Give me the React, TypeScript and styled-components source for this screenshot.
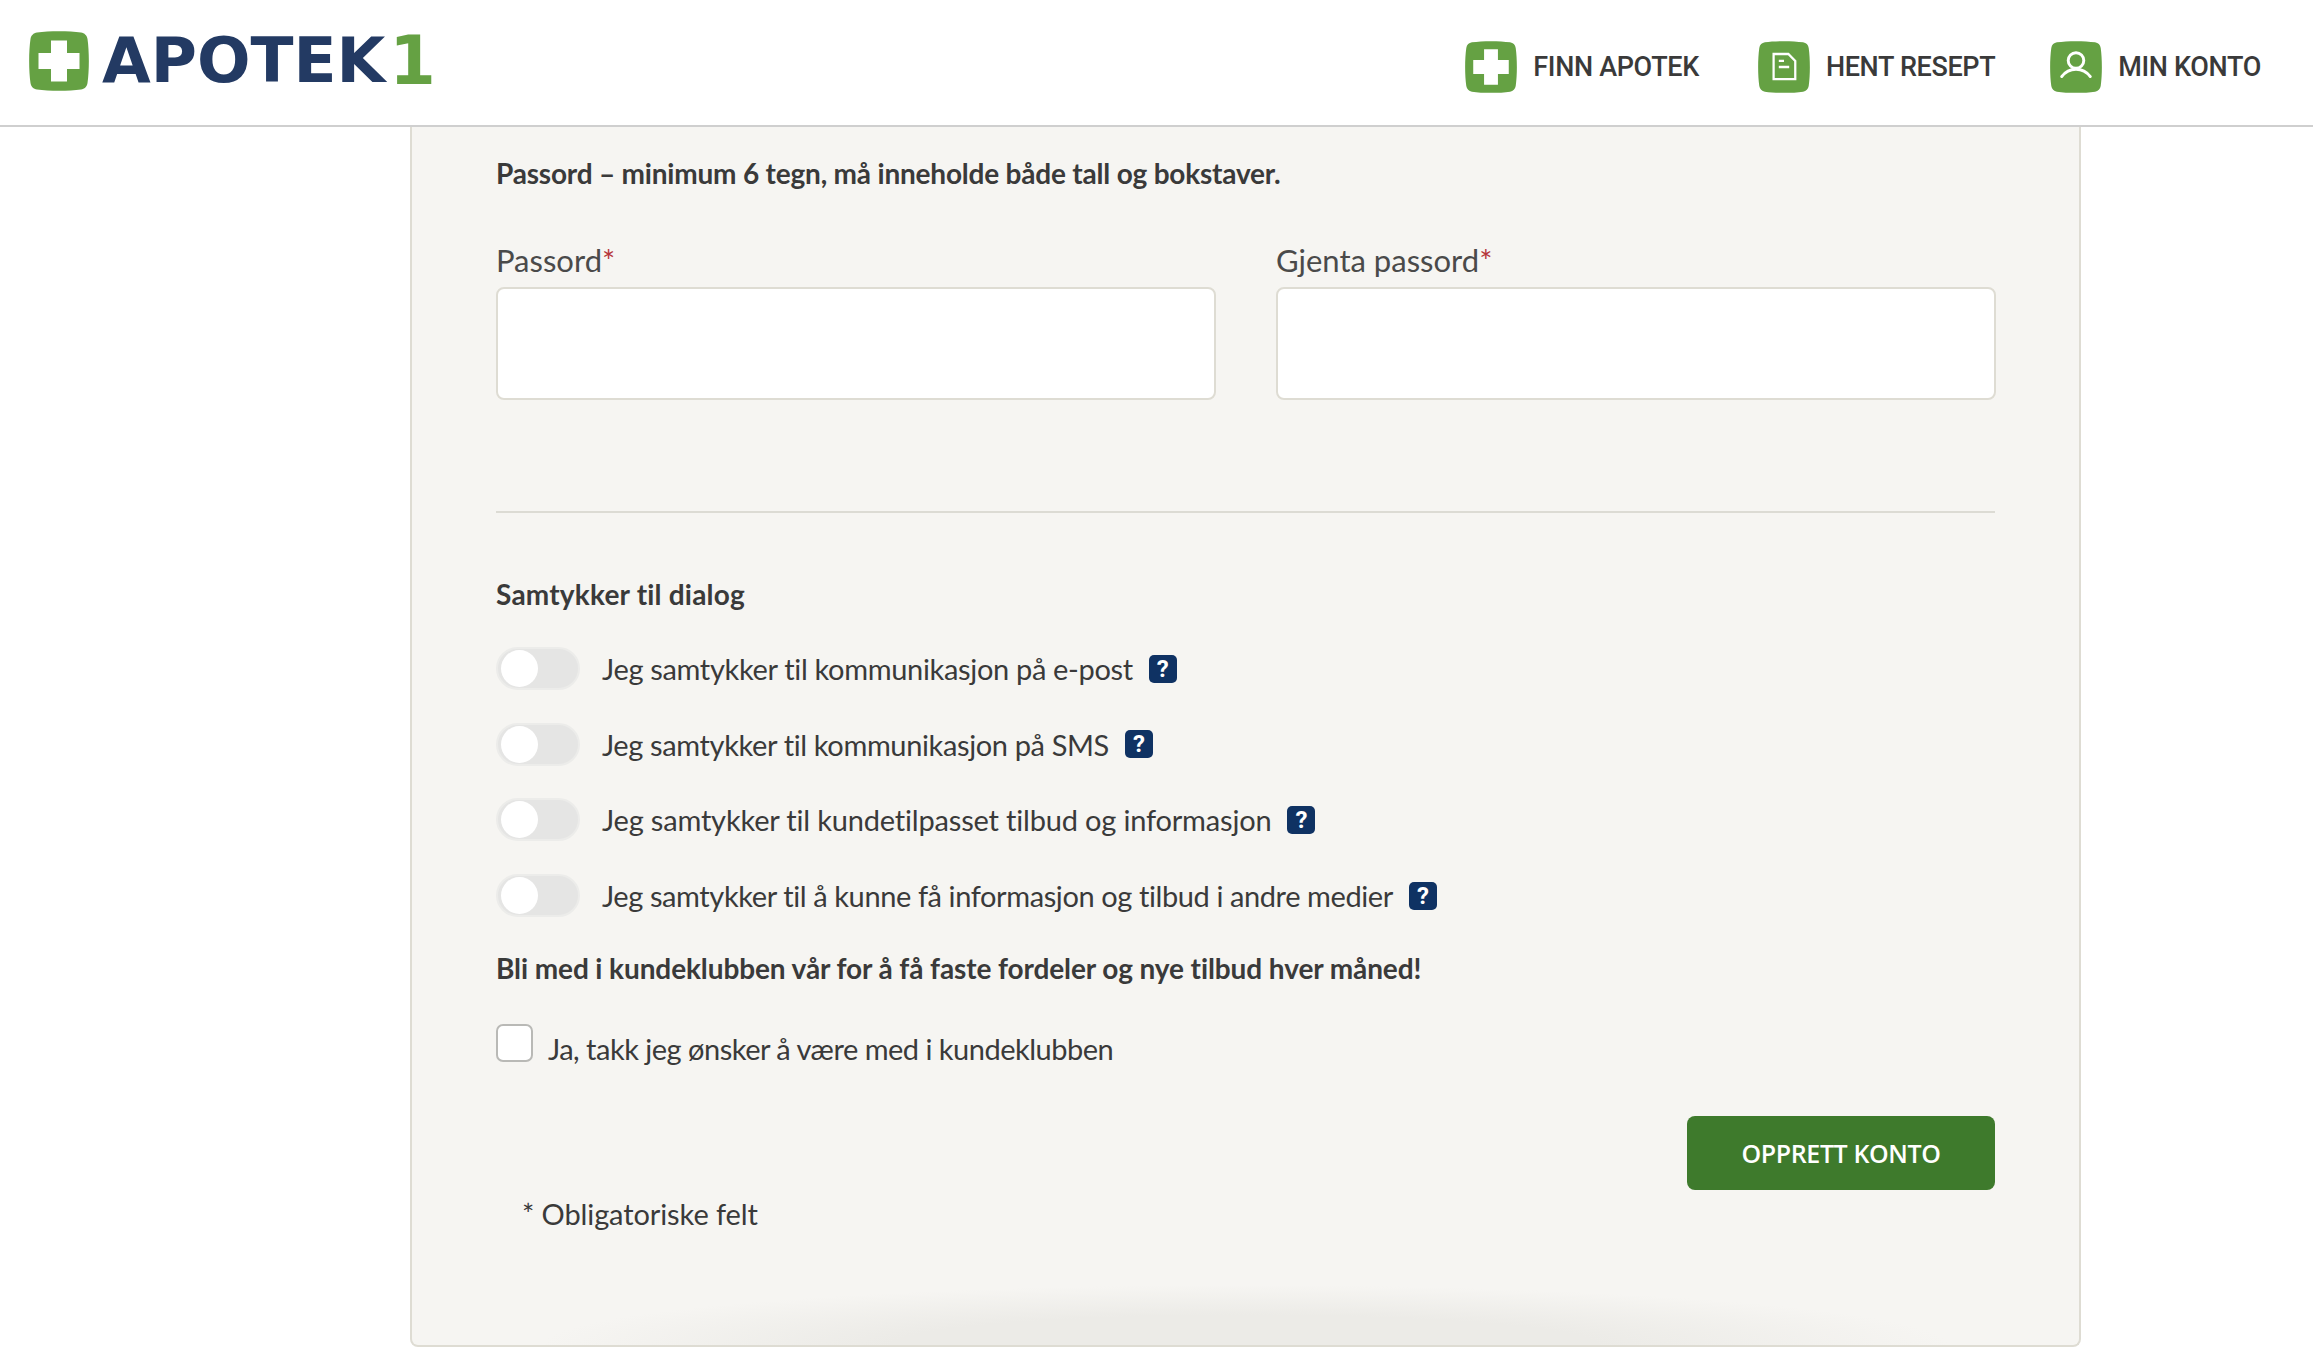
import React from "react";
import styled, { createGlobalStyle } from "styled-components";

const GlobalStyle = createGlobalStyle`
  html, body {
    margin: 0;
    padding: 0;
    background: #fff;
  }
  body {
    font-family: Lato, "Liberation Sans", sans-serif;
    color: #3a3a3a;
    overflow: hidden;
  }
`;

const Page = styled.div`
  width: 2313px;
  height: 1350px;
  overflow: hidden;
`;

const Header = styled.header`
  height: 125px;
  display: flex;
  align-items: flex-start;
  justify-content: space-between;
  border-bottom: 2px solid #cfcfcf;
  box-sizing: content-box;
`;

const Logo = styled.a`
  display: flex;
  align-items: center;
  gap: 13px;
  padding: 31px 0 0 29px;
`;

const LogoWord = styled.span`
  font-family: "DejaVu Sans", sans-serif;
  font-weight: 700;
  font-size: 63px;
  line-height: 60px;
  color: #233a63;
`;

const LogoDigit = styled.span`
  font-family: "DejaVu Sans", sans-serif;
  font-weight: 700;
  font-size: 67px;
  line-height: 60px;
  margin-left: -9px;
  color: #65a143;
`;

const Nav = styled.nav`
  display: flex;
  align-items: center;
  padding: 41px 52px 0 0;
`;

const NavLink = styled.a<{ $gap: number }>`
  display: flex;
  align-items: center;
  gap: 16px;
  margin-left: ${(p) => p.$gap}px;
  font-family: Roboto, sans-serif;
  font-size: 27px;
  font-weight: 500;
  letter-spacing: -0.35px;
  line-height: 50px;
  color: #3a3a3a;
  white-space: nowrap;
`;

const Main = styled.main`
  padding-left: 410px;
`;

const Card = styled.section`
  position: relative;
  width: 1671px;
  height: 1220px;
  box-sizing: border-box;
  padding: 29px 84px 0;
  background: #f6f5f2;
  border: 2px solid #dedcd3;
  border-top: none;
  border-radius: 0 0 8px 8px;
  overflow: hidden;

  &::after {
    content: "";
    position: absolute;
    left: 130px;
    right: 130px;
    bottom: -60px;
    height: 120px;
    background: radial-gradient(closest-side, #ecebe7 50%, rgba(236, 235, 231, 0));
    pointer-events: none;
  }
`;

const Intro = styled.p`
  margin: 0;
  font-size: 28px;
  font-weight: 700;
  letter-spacing: -0.2px;
  line-height: 34px;
`;

const Fields = styled.div`
  display: grid;
  grid-template-columns: 720px 720px;
  column-gap: 60px;
  margin-top: 50px;
`;

const Field = styled.label`
  display: flex;
  flex-direction: column;
  font-size: 31px;
  line-height: 40px;
  color: #4a4a4a;
`;

const Required = styled.span`
  color: #b5353a;
`;

const Input = styled.input`
  height: 113px;
  margin-top: 7px;
  box-sizing: border-box;
  background: #fff;
  border: 2px solid #dedcd3;
  border-radius: 8px;
  outline: none;
`;

const Divider = styled.hr`
  margin: 111px 0 0;
  border: none;
  border-top: 2px solid #dcdbd4;
`;

const SectionTitle = styled.h3`
  margin: 63px 0 0;
  font-size: 28px;
  font-weight: 700;
  letter-spacing: 0.2px;
  line-height: 36px;
`;

const ConsentList = styled.div`
  display: flex;
  flex-direction: column;
  gap: 32px;
  margin-top: 35px;
`;

const ConsentRow = styled.div`
  display: flex;
  align-items: center;
  height: 43.6px;
  font-size: 29px;
`;

const Toggle = styled.span`
  flex: none;
  width: 84px;
  height: 43px;
  box-sizing: border-box;
  padding: 1px 3px;
  border: 2px solid #ececea;
  border-radius: 22px;
  background: #e5e5e4;
`;

const Knob = styled.span`
  display: block;
  width: 37px;
  height: 37px;
  border-radius: 50%;
  background: #fff;
`;

const ConsentText = styled.span<{ $tracking: number }>`
  margin-left: 22px;
  letter-spacing: ${(p) => p.$tracking}px;
  white-space: nowrap;
`;

const Help = styled.span`
  flex: none;
  width: 28px;
  height: 28px;
  margin-left: 16px;
  border-radius: 5px;
  background: #0f3263;
  color: #fff;
  font-family: Roboto, sans-serif;
  font-size: 24px;
  font-weight: 700;
  line-height: 28px;
  text-align: center;
`;

const ClubTitle = styled.p`
  margin: 33px 0 0;
  font-size: 28px;
  font-weight: 700;
  letter-spacing: -0.1px;
  line-height: 36px;
`;

const ClubRow = styled.label`
  display: flex;
  align-items: flex-start;
  margin-top: 38px;
  font-size: 29px;
  letter-spacing: -0.5px;
`;

const Checkbox = styled.span`
  flex: none;
  width: 37px;
  height: 38px;
  box-sizing: border-box;
  background: #fff;
  border: 2px solid #b9b9b6;
  border-radius: 7px;
`;

const ClubText = styled.span`
  margin: 5px 0 0 15px;
  line-height: 40px;
`;

const Footer = styled.div`
  display: flex;
  align-items: flex-start;
  justify-content: space-between;
  margin-top: 47px;
`;

const RequiredNote = styled.span`
  margin: 79px 0 0 26px;
  font-size: 29px;
  letter-spacing: -0.1px;
  line-height: 38px;
`;

const SubmitButton = styled.button`
  width: 308px;
  height: 74px;
  border: none;
  border-radius: 8px;
  background: #3e7a2c;
  color: #fff;
  font-family: "Open Sans", sans-serif;
  font-size: 25px;
  font-weight: 600;
  letter-spacing: -0.4px;
`;

const Squircle = () => (
  <path
    d="M8 1.5C20 -.3 40 -.3 52 1.5C55.5 2 58 4.500 58.500 8C60.300 20 60.300 40 58.500 52C58 55.500 55.500 58 52 58.500C40 60.300 20 60.300 8 58.500C4.500 58 2 55.500 1.500 52C-.3 40 -.3 20 1.500 8C2 4.500 4.500 2 8 1.500Z"
    fill="#65a143"
  />
);

const Cross = () => <path d="M22 9.500H38V22H50.500V38H38V50.500H22V38H9.500V22H22Z" fill="#fff" />;

const BrandIcon = ({ size, children }: { size: number; children?: React.ReactNode }) => (
  <svg width={size} height={size} viewBox="0 0 60 60" style={{ flex: "none" }}>
    <Squircle />
    {children}
  </svg>
);

const DocumentGlyph = () => (
  <g fill="none" stroke="#fff" strokeWidth="2.6">
    <path d="M18 15H35L43 23V44H18Z" />
    <path d="M24 23H30M24 30H36" />
  </g>
);

const PersonGlyph = () => (
  <g fill="none" stroke="#fff" strokeWidth="3.4" strokeLinecap="round">
    <circle cx="30" cy="22.500" r="9" />
    <path d="M13.500 41C18 35 24 32.500 30 32.500C36 32.500 42 35 46.500 41" />
  </g>
);

const consents = [
  { text: "Jeg samtykker til kommunikasjon på e-post", tracking: -0.33 },
  { text: "Jeg samtykker til kommunikasjon på SMS", tracking: -0.37 },
  { text: "Jeg samtykker til kundetilpasset tilbud og informasjon", tracking: -0.18 },
  { text: "Jeg samtykker til å kunne få informasjon og tilbud i andre medier", tracking: -0.4 },
];

export default function App() {
  return (
    <Page>
      <GlobalStyle />
      <Header>
        <Logo>
          <BrandIcon size={60}>
            <Cross />
          </BrandIcon>
          <LogoWord>APOTEK</LogoWord>
          <LogoDigit>1</LogoDigit>
        </Logo>
        <Nav>
          <NavLink $gap={0}>
            <BrandIcon size={52}>
              <Cross />
            </BrandIcon>
            FINN APOTEK
          </NavLink>
          <NavLink $gap={59}>
            <BrandIcon size={52}>
              <DocumentGlyph />
            </BrandIcon>
            HENT RESEPT
          </NavLink>
          <NavLink $gap={55}>
            <BrandIcon size={52}>
              <PersonGlyph />
            </BrandIcon>
            MIN KONTO
          </NavLink>
        </Nav>
      </Header>
      <Main>
        <Card>
          <Intro>Passord – minimum 6 tegn, må inneholde både tall og bokstaver.</Intro>
          <Fields>
            <Field>
              <span>
                Passord<Required>*</Required>
              </span>
              <Input type="password" />
            </Field>
            <Field>
              <span>
                Gjenta passord<Required>*</Required>
              </span>
              <Input type="password" />
            </Field>
          </Fields>
          <Divider />
          <SectionTitle>Samtykker til dialog</SectionTitle>
          <ConsentList>
            {consents.map((row) => (
              <ConsentRow key={row.text}>
                <Toggle>
                  <Knob />
                </Toggle>
                <ConsentText $tracking={row.tracking}>{row.text}</ConsentText>
                <Help>?</Help>
              </ConsentRow>
            ))}
          </ConsentList>
          <ClubTitle>Bli med i kundeklubben vår for å få faste fordeler og nye tilbud hver måned!</ClubTitle>
          <ClubRow>
            <Checkbox />
            <ClubText>Ja, takk jeg ønsker å være med i kundeklubben</ClubText>
          </ClubRow>
          <Footer>
            <RequiredNote>* Obligatoriske felt</RequiredNote>
            <SubmitButton>OPPRETT KONTO</SubmitButton>
          </Footer>
        </Card>
      </Main>
    </Page>
  );
}
